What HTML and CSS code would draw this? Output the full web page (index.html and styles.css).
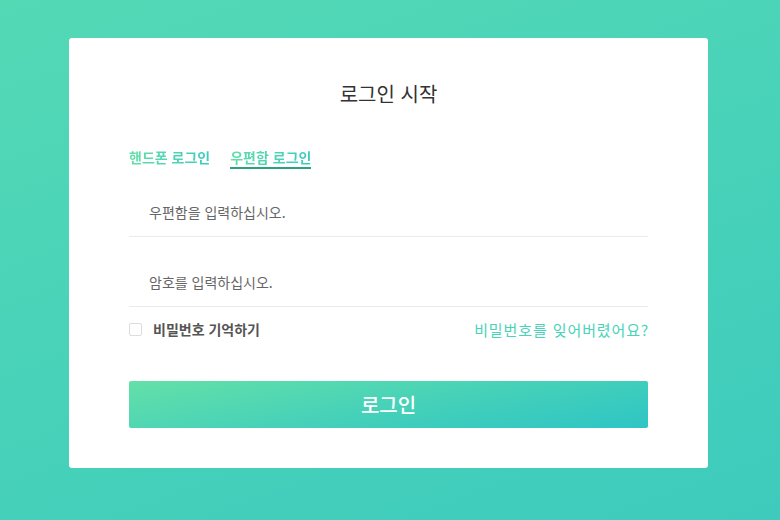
FILE: index.html
```html
<!DOCTYPE html>
<html lang="ko">
<head>
<meta charset="utf-8">
<title>로그인 시작</title>
<link rel="stylesheet" href="styles.css">
</head>
<body>
<main class="page">
  <section class="card">
    <h1 class="title">로그인 시작</h1>
    <nav class="tabs">
      <a class="tab">핸드폰 로그인</a>
      <a class="tab tab-active">우편함 로그인</a>
    </nav>
    <div class="field field-first">
      <input class="input" type="text" placeholder="우편함을 입력하십시오.">
    </div>
    <div class="field">
      <input class="input" type="password" placeholder="암호를 입력하십시오.">
    </div>
    <div class="options">
      <label class="remember"><span class="checkbox"></span><span>비밀번호 기억하기</span></label>
      <a class="forgot">비밀번호를 잊어버렸어요?</a>
    </div>
    <button class="submit" type="button">로그인</button>
  </section>
</main>
</body>
</html>
```
FILE: styles.css
```css
* { box-sizing: border-box; }
html, body { margin: 0; padding: 0; }
body {
  font-family: "Noto Sans CJK KR", "Noto Sans", sans-serif;
  width: 780px;
  height: 520px;
  overflow: hidden;
}
.page {
  height: 520px;
  background: linear-gradient(160deg, #54d9b5 0%, #48d2b9 50%, #3ecbbd 100%);
  padding: 38px 72px 52px 69px;
}
.card {
  background: #fff;
  border-radius: 3px;
  width: 639px;
  height: 430px;
  padding: 43px 60px 40px;
  display: flex;
  flex-direction: column;
}
.title {
  margin: 0;
  font-size: 20px;
  font-weight: 400;
  line-height: 26px;
  color: #333;
  text-align: center;
}
.tabs {
  margin-top: 42px;
  display: flex;
  gap: 20px;
  height: 20px;
}
.tab {
  font-size: 14px;
  font-weight: 700;
  line-height: 17px;
  height: 20px;
  background: linear-gradient(90deg, #62dfa7, #3ccbc0);
  -webkit-background-clip: text;
  background-clip: text;
  color: transparent;
  border-bottom: 2px solid transparent;
}
.tab-active {
  border-bottom-color: #2fa07e;
}
.field {
  margin-top: 20px;
  height: 50px;
  border-bottom: 1px solid #ebebeb;
  display: flex;
}
.field-first { margin-top: 18px; }
.input {
  flex: 1;
  border: 0;
  outline: 0;
  padding: 0 20px;
  font-family: inherit;
  font-size: 14px;
  color: #333;
  background: transparent;
}
.input::placeholder { color: #666; }
.options {
  margin-top: 12px;
  height: 20px;
  display: flex;
  align-items: center;
  justify-content: space-between;
}
.remember {
  display: flex;
  align-items: center;
  gap: 11px;
  font-size: 14px;
  font-weight: 700;
  color: #555;
}
.checkbox {
  width: 13px;
  height: 13px;
  border: 1px solid #dcdcdc;
  border-radius: 2px;
  background: #fff;
}
.forgot {
  font-size: 15px;
  letter-spacing: 0.9px;
  margin-right: -1px;
  color: #4ad3b8;
}
.submit {
  margin-top: 42px;
  height: 47px;
  border: 0;
  border-radius: 2px;
  background: linear-gradient(170deg, #64e0a8 0%, #47d2b8 50%, #2ec5c5 100%);
  color: #fff;
  font-family: inherit;
  font-size: 20px;
  font-weight: 500;
}
```
